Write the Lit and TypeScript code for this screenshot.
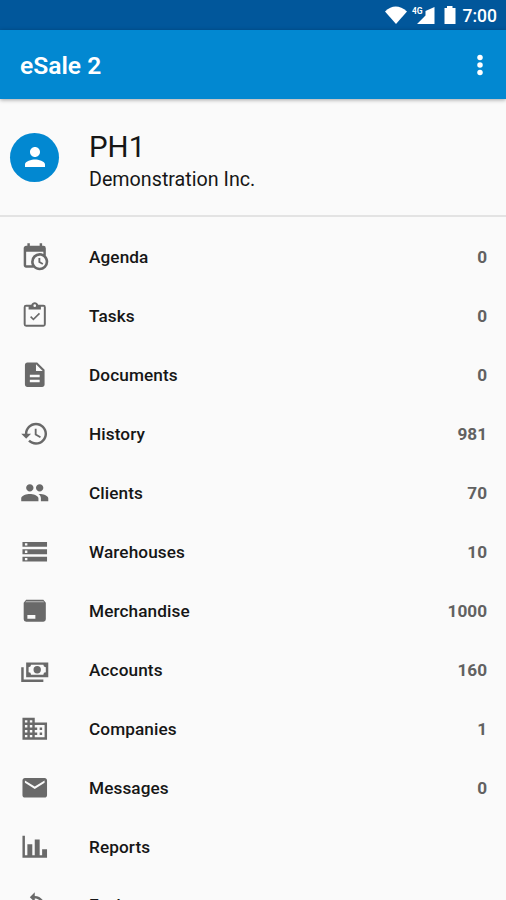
import { LitElement, html, css, svg } from "lit";
import { customElement } from "lit/decorators.js";

const icons: Record<string, unknown> = {
  agenda: svg`<path d="M15,13H16.5V15.82L18.94,17.23L18.19,18.53L15,16.69V13M19,8H5V19H9.67C9.24,18.09 9,17.07 9,16A7,7 0 0,1 16,9C17.07,9 18.09,9.24 19,9.67V8M5,21C3.89,21 3,20.1 3,19V5C3,3.89 3.89,3 5,3H6V1H8V3H16V1H18V3H19A2,2 0 0,1 21,5V11.1C22.24,12.36 23,14.09 23,16A7,7 0 0,1 16,23C14.09,23 12.36,22.24 11.1,21H5M16,11.15A4.85,4.85 0 0,0 11.15,16C11.15,18.68 13.32,20.85 16,20.85A4.85,4.85 0 0,0 20.85,16C20.85,13.32 18.68,11.15 16,11.15Z"/>`,
  tasks: svg`<path fill-rule="evenodd" d="M19,3H14.820C14.400,1.840 13.300,1 12,1C10.700,1 9.600,1.840 9.180,3H5A2,2 0 0,0 3,5V19A2,2 0 0,0 5,21H19A2,2 0 0,0 21,19V5A2,2 0 0,0 19,3M12,2.700A1.100,1.100 0 0,1 12,4.900A1.100,1.100 0 0,1 12,2.700M7,7H17V4.700H19.400V19.400H4.600V4.700H7V7M8.200,13.200L9.100,12.300L10.900,14.100L15.400,9.600L16.300,10.500L10.900,15.900Z"/>`,
  documents: svg`<path d="M14 2H6c-1.100 0-1.990.9-1.990 2L4 20c0 1.100.89 2 1.990 2H18c1.100 0 2-.9 2-2V8l-6-6zm2 16H8v-2h8v2zm0-4H8v-2h8v2zm-3-5V3.500L18.500 9H13z"/>`,
  history: svg`<path d="M13 3c-4.970 0-9 4.030-9 9H1l3.890 3.890.07.14L9 12H6c0-3.870 3.130-7 7-7s7 3.130 7 7-3.130 7-7 7c-1.930 0-3.680-.79-4.940-2.060l-1.420 1.420C8.270 19.990 10.510 21 13 21c4.970 0 9-4.030 9-9s-4.030-9-9-9zm-1 5v5l4.280 2.540.72-1.210-3.500-2.080V8H12z"/>`,
  clients: svg`<path d="M16 11c1.660 0 2.990-1.340 2.990-3S17.660 5 16 5s-3 1.340-3 3 1.340 3 3 3zm-8 0c1.660 0 2.990-1.340 2.990-3S9.660 5 8 5 5 6.340 5 8s1.340 3 3 3zm0 2c-2.330 0-7 1.170-7 3.500V19h14v-2.500c0-2.330-4.670-3.500-7-3.500zm8 0c-.29 0-.62.02-.97.05 1.160.84 1.970 1.970 1.970 3.450V19h6v-2.500c0-2.330-4.670-3.500-7-3.500z"/>`,
  warehouses: svg`<path d="M2 20h20v-4H2v4zm2-3h2v2H4v-2zM2 4v4h20V4H2zm4 3H4V5h2v2zm-4 7h20v-4H2v4zm2-3h2v2H4v-2z"/>`,
  merchandise: svg`<path fill-rule="evenodd" d="M5 3h14l2 2.500V19a2 2 0 0 1-2 2H5a2 2 0 0 1-2-2V5.500zM6 15.500v3h6.500v-3z"/><path fill="#bdbdbd" d="M5 4.300h14l.6.8H4.400z"/>`,
  accounts: svg`<path d="M5,6H23V18H5V6M14,9A3,3 0 0,1 17,12A3,3 0 0,1 14,15A3,3 0 0,1 11,12A3,3 0 0,1 14,9M9,8A2,2 0 0,1 7,10V14A2,2 0 0,1 9,16H19A2,2 0 0,1 21,14V10A2,2 0 0,1 19,8H9M1,10H3V20H19V22H1V10Z"/>`,
  companies: svg`<path d="M12 7V3H2v18h20V7H12zM6 19H4v-2h2v2zm0-4H4v-2h2v2zm0-4H4V9h2v2zm0-4H4V5h2v2zm4 12H8v-2h2v2zm0-4H8v-2h2v2zm0-4H8V9h2v2zm0-4H8V5h2v2zm10 12h-8v-2h2v-2h-2v-2h2v-2h-2V9h8v10zm-2-8h-2v2h2v-2zm0 4h-2v2h2v-2z"/>`,
  messages: svg`<path d="M20 4H4c-1.100 0-1.990.9-1.990 2L2 18c0 1.100.9 2 2 2h16c1.100 0 2-.9 2-2V6c0-1.100-.9-2-2-2zm0 4l-8 5-8-5V6l8 5 8-5v2z"/>`,
  reports: svg`<path d="M22,21H2V3H4V19H6V10H10V19H12V6H16V19H18V14H22V21Z"/>`,
  sync: svg`<path d="M12 4V1L8 5l4 4V6c3.310 0 6 2.690 6 6 0 1.010-.25 1.970-.7 2.800l1.460 1.460C19.540 15.030 20 13.570 20 12c0-4.420-3.580-8-8-8zm0 14c-3.310 0-6-2.690-6-6 0-1.010.25-1.970.7-2.800L5.240 7.740C4.460 8.970 4 10.430 4 12c0 4.420 3.580 8 8 8v3l4-4-4-4v3z"/>`,
};

const rows: [string, string, string][] = [
  ["agenda", "Agenda", "0"],
  ["tasks", "Tasks", "0"],
  ["documents", "Documents", "0"],
  ["history", "History", "981"],
  ["clients", "Clients", "70"],
  ["warehouses", "Warehouses", "10"],
  ["merchandise", "Merchandise", "1000"],
  ["accounts", "Accounts", "160"],
  ["companies", "Companies", "1"],
  ["messages", "Messages", "0"],
  ["reports", "Reports", ""],
  ["sync", "Exchange", ""],
];

@customElement("app-root")
export class AppRoot extends LitElement {
  static styles = css`
    :host {
      display: flex;
      flex-direction: column;
      height: 900px;
      overflow: hidden;
      background: #fafafa;
      font-family: Roboto, "Noto Sans", sans-serif;
      color: #161616;
    }
    svg { display: block; flex: none; }
    .status {
      flex: none;
      height: 30px;
      box-sizing: border-box;
      padding-right: 9px;
      background: #01579b;
      color: #fff;
      display: flex;
      justify-content: flex-end;
      align-items: center;
      font-size: 17.500px;
      line-height: 30px;
      font-weight: 500;
    }
    .clock { padding-top: 2px; margin-left: 7px; }
    .network { font-size: 8.500px; font-weight: 700; }
    .bar {
      flex: none;
      height: 69px;
      box-sizing: border-box;
      padding: 0 11px 0 20px;
      background: #0288d1;
      color: #fff;
      display: flex;
      align-items: center;
      justify-content: space-between;
      box-shadow: 0 1px 4px rgba(0, 0, 0, 0.35);
      z-index: 1;
    }
    .title { font-size: 24.600px; font-weight: 600; padding-top: 2px; }
    .profile {
      flex: none;
      height: 118px;
      box-sizing: border-box;
      padding: 0 10px;
      border-bottom: 2px solid #e3e3e3;
      display: flex;
      align-items: center;
      gap: 30px;
    }
    .avatar {
      width: 49px;
      height: 49px;
      border-radius: 50%;
      background: #0288d1;
      display: grid;
      place-items: center;
    }
    .who { padding-top: 7px; }
    .name { font-size: 29.500px; line-height: 34px; }
    .company { font-size: 19.700px; line-height: 24px; margin-top: 4px; }
    .list {
      padding-top: 10.500px;
      display: flex;
      flex-direction: column;
    }
    .row {
      flex: none;
      height: 59.050px;
      padding: 0 19px 0 20px;
      display: flex;
      align-items: center;
      font-size: 17.200px;
      font-weight: 500;
    }
    .icon { fill: #696969; margin-bottom: 1.500px; }
    .label { flex: 1; margin-left: 39.500px; letter-spacing: 0.100px; }
    .row:last-child .label { padding-bottom: 3px; }
    .count { color: #616161; font-weight: 700; }
  `;

  render() {
    return html`
      <div class="status">
        <svg width="72" height="30" viewBox="0 0 72 30" fill="#fff">
          <path d="M1 11.500Q11.500 1.500 23 11.500L12 24Z" />
          <path d="M50.500 7V24H33L41.500 15.500V11Z" />
          <text class="network" x="28" y="13.500" stroke="#01579b" stroke-width="1.500" paint-order="stroke" textLength="10.500">4G</text>
          <path d="M60.500 8H63V6H68.500V8H71.500V24H60.500Z" />
        </svg>
        <span class="clock">7:00</span>
      </div>
      <header class="bar">
        <span class="title">eSale 2</span>
        <svg width="30" height="30" viewBox="0 0 24 24" fill="#fff">
          <circle cx="12" cy="6" r="2.200" /><circle cx="12" cy="12" r="2.200" /><circle cx="12" cy="18" r="2.200" />
        </svg>
      </header>
      <section class="profile">
        <div class="avatar">
          <svg width="30" height="30" viewBox="0 0 24 24" fill="#fff">
            <path d="M12 12c2.210 0 4-1.790 4-4s-1.790-4-4-4-4 1.790-4 4 1.790 4 4 4zm0 2c-2.670 0-8 1.340-8 4v2h16v-2c0-2.660-5.330-4-8-4z" />
          </svg>
        </div>
        <div class="who">
          <div class="name">PH1</div>
          <div class="company">Demonstration Inc.</div>
        </div>
      </section>
      <main class="list">
        ${rows.map(
          ([icon, label, count]) => html`<div class="row">
            <svg class="icon" width="29.500" height="29.500" viewBox="0 0 24 24">${icons[icon]}</svg>
            <span class="label">${label}</span>
            <span class="count">${count}</span>
          </div>`
        )}
      </main>
    `;
  }
}
